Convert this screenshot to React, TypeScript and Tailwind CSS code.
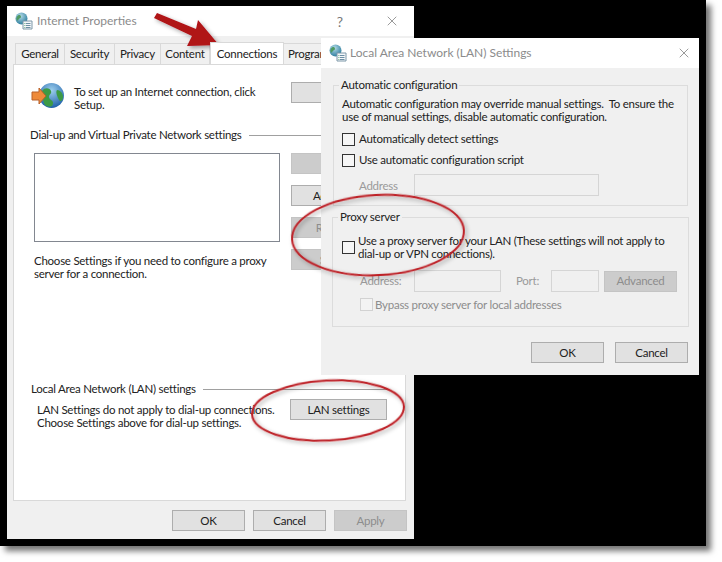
import React from 'react';
import { X } from 'lucide-react';

const PropsIcon = () => (
  <svg width="18" height="18" viewBox="0 0 18 18" className="shrink-0">
    <defs>
      <radialGradient id="pg" cx="40%" cy="30%" r="70%">
        <stop offset="0%" stopColor="#b5dbe8" />
        <stop offset="100%" stopColor="#2f7f9f" />
      </radialGradient>
    </defs>
    <circle cx="6.500" cy="6.500" r="6" fill="url(#pg)" />
    <path d="M3 3.500c2-1 3 0 3 1.500s-2 1-2.500 2.500S2 9 1.500 7.500 2 4 3 3.500z" fill="#4f9a62" />
    <path d="M8 9h9v8H8z" fill="#f4f7fa" stroke="#7c97a8" />
    <path d="M11 11.500h4.500M11 13.500h4.500M11 15.500h4.500" stroke="#6d8fa5" />
    <path d="M9.500 11.500h.8M9.500 13.500h.8M9.500 15.500h.8" stroke="#3f9a5c" />
  </svg>
);

const ConnectIcon = () => (
  <svg width="34" height="28" viewBox="0 0 34 28" className="shrink-0">
    <defs>
      <radialGradient id="gl" cx="50%" cy="30%" r="70%">
        <stop offset="0%" stopColor="#9ed0ee" />
        <stop offset="100%" stopColor="#1d5fa8" />
      </radialGradient>
    </defs>
    <circle cx="20.500" cy="13.500" r="12.500" fill="url(#gl)" />
    <path d="M11 9c3-4 8-3 9 0s-2 3-2 6 5 3 4 7-6 3-8 1-1-5-3-7-1-5 0-7z" fill="#3d9a45" />
    <path d="M26 8c3 0 6 3 6 7s-3 5-4 3-4-8-2-10z" fill="#3d9a45" />
    <path d="M1 10h7V6l7 8-7 8v-4H1z" fill="#ee8a3a" stroke="#b8602a" />
  </svg>
);

const Btn = ({ label, disabled, w = 'w-[73px]', h = 'h-[21px]' }: { label?: string; disabled?: boolean; w?: string; h?: string }) => (
  <div
    className={`${w} ${h} shrink-0 flex items-center justify-center border ${
      disabled ? 'bg-[#cccccc] border-[#c4c4c4] text-[#8d8d8d]' : 'bg-[#e1e1e1] border-[#adadad] text-[#222]'
    }`}
  >
    {label}
  </div>
);

const Check = ({ muted }: { muted?: boolean }) => (
  <div className={`w-[13px] h-[13px] shrink-0 border ${muted ? 'border-[#d2d2d2] bg-[#f3f3f3]' : 'border-[#333] bg-[#f6f6f6]'}`} />
);

const Legend = ({ title }: { title: string }) => (
  <div className="absolute -top-[9px] left-[5px] bg-[#f0f0f0] px-[2px] leading-[16px] text-[#222]">{title}</div>
);

const Field = ({ w }: { w: string }) => <div className={`${w} h-[22px] border border-[#d5d5d5] bg-[#f0f0f0]`} />;

const tabs = ['General', 'Security', 'Privacy', 'Content'];
const tabW = ['w-[50px]', 'w-[51px]', 'w-[47px]', 'w-[50px]'];

const InternetProperties = () => (
  <div className="absolute left-[7px] top-[6px] w-[407px] h-[533px] bg-[#f0f0f0] flex flex-col">
    <div className="h-[30px] bg-white flex items-center pl-[8px] shrink-0 text-[#8b8b8b] text-[12px] tracking-normal">
      <PropsIcon />
      <span className="ml-[4px]">Internet Properties</span>
      <span className="ml-auto mr-[41px] text-[14px] text-[#777]">?</span>
      <X size={16} strokeWidth={1} className="mr-[14px] text-[#666]" />
    </div>
    <div className="h-[28px] flex items-end pl-[8px] shrink-0">
      {tabs.map((t, i) => (
        <div key={t} className={`${tabW[i]} h-[21px] bg-[#f0f0f0] border border-b-0 border-[#d9d9d9] -mr-px flex items-center justify-center text-[#222]`}>
          {t}
        </div>
      ))}
      <div className="w-[74px] h-[22px] bg-white border border-b-0 border-[#d9d9d9] relative z-10 ml-px flex items-center justify-center text-[#222]">
        Connections
      </div>
      <div className="w-[60px] h-[21px] bg-[#f0f0f0] border border-b-0 border-[#d9d9d9] -ml-px pl-[4px] flex items-center text-[#222]">
        Programs
      </div>
    </div>
    <div className="mx-[6px] w-[393px] h-[437px] bg-white border border-[#d9d9d9] shrink-0 flex flex-col pl-[17px] pr-[18px] text-[#222]">
      <div className="flex items-start mt-[17px] h-[44px]">
        <ConnectIcon />
        <div className="ml-[9px] leading-[13px] mt-[3px] whitespace-nowrap">
          <div>To set up an Internet connection, click</div>
          <div>Setup.</div>
        </div>
        {/* label sits behind the LAN dialog */}
        <div className="ml-auto"><Btn w="w-[96px]" /></div>
      </div>
      <div className="flex items-center mt-[1px] -ml-[1px] h-[16px]">
        <span className="whitespace-nowrap">Dial-up and Virtual Private Network settings</span>
        <div className="flex-1 h-px bg-[#a0a0a0] ml-[7px]" />
      </div>
      <div className="flex mt-[10px] justify-between pl-[3px] h-[138px]">
        <div className="w-[246px] h-[89px] border border-[#828790] bg-white" />
        <div className="flex flex-col gap-[11px]">
          <Btn label="Add..." disabled w="w-[96px]" />
          <Btn label="Add VPN..." w="w-[96px]" />
          <Btn label="Remove..." disabled w="w-[96px]" />
          <Btn label="Settings" disabled w="w-[96px]" />
        </div>
      </div>
      <div className="-mt-[37px] pl-[3px] leading-[13px] whitespace-nowrap">
        <div>Choose Settings if you need to configure a proxy</div>
        <div>server for a connection.</div>
      </div>
      <div className="flex items-center mt-[101px] h-[16px]">
        <span className="whitespace-nowrap">Local Area Network (LAN) settings</span>
        <div className="flex-1 h-px bg-[#a0a0a0] ml-[7px]" />
      </div>
      <div className="flex items-start mt-[2px] pl-[6px]">
        <div className="leading-[13px] mt-[4px] whitespace-nowrap">
          <div>LAN Settings do not apply to dial-up connections.</div>
          <div>Choose Settings above for dial-up settings.</div>
        </div>
        <div className="ml-auto"><Btn label="LAN settings" w="w-[97px]" /></div>
      </div>
    </div>
    <div className="flex justify-end gap-[8px] pr-[7px] mt-[9px]">
      <Btn label="OK" />
      <Btn label="Cancel" />
      <Btn label="Apply" disabled />
    </div>
  </div>
);

const LanSettings = () => (
  <div className="absolute left-[321px] top-[38px] w-[378px] h-[337px] bg-[#f0f0f0] flex flex-col text-[#222]">
    <div className="h-[30px] bg-white flex items-center pl-[8px] shrink-0 text-[#8b8b8b] text-[12px] tracking-normal">
      <PropsIcon />
      <span className="ml-[3px]">Local Area Network (LAN) Settings</span>
      <X size={16} strokeWidth={1} className="ml-auto mr-[7px] text-[#666]" />
    </div>
    <div className="relative mt-[17px] ml-[12px] w-[355px] h-[121px] border border-[#dcdcdc] pl-[8px] pt-[11px] shrink-0">
      <Legend title="Automatic configuration" />
      <div className="leading-[13px] whitespace-nowrap">
        <div>Automatic configuration may override manual settings.&nbsp; To ensure the</div>
        <div>use of manual settings, disable automatic configuration.</div>
      </div>
      <div className="flex items-center gap-[4px] mt-[8px] h-[16px]"><Check />Automatically detect settings</div>
      <div className="flex items-center gap-[4px] mt-[5px] h-[16px]"><Check />Use automatic configuration script</div>
      <div className="flex items-center mt-[6px] pl-[17px] text-[#9a9a9a]">
        <span className="w-[55px] pt-[2px]">Address</span>
        <Field w="w-[185px]" />
      </div>
    </div>
    <div className="relative mt-[11px] ml-[11px] w-[357px] h-[110px] border border-[#dcdcdc] pl-[9px] pt-[16px] shrink-0">
      <Legend title="Proxy server" />
      <div className="flex items-center gap-[3px]">
        <Check />
        <div className="leading-[13px] whitespace-nowrap">
          <div>Use a proxy server for your LAN (These settings will not apply to</div>
          <div>dial-up or VPN connections).</div>
        </div>
      </div>
      <div className="flex items-center mt-[10px] pl-[18px] text-[#9a9a9a]">
        <span className="w-[54px]">Address:</span>
        <Field w="w-[87px]" />
        <span className="ml-[15px] w-[35px]">Port:</span>
        <Field w="w-[48px]" />
        <div className="ml-[5px]"><Btn label="Advanced" disabled /></div>
      </div>
      <div className="flex items-center gap-[2px] mt-[4px] pl-[18px] text-[#8d8d8d]">
        <Check muted />
        Bypass proxy server for local addresses
      </div>
    </div>
    <div className="flex justify-end gap-[11px] pr-[11px] mt-[15px]">
      <Btn label="OK" />
      <Btn label="Cancel" />
    </div>
  </div>
);

// red arrow and hand-drawn circles on top of the screenshot
const Annotations = () => (
  <svg width="722" height="562" className="absolute left-0 top-0 pointer-events-none">
    <defs>
      <filter id="sh" x="-20%" y="-20%" width="140%" height="140%">
        <feDropShadow dx="2" dy="2" stdDeviation="2" floodColor="#000" floodOpacity="0.35" />
      </filter>
    </defs>
    <g filter="url(#sh)">
      <path d="M154 18 L157 13 L196 29 L198 20 L219 45 L187 46 L192 36 Z" fill="#b01218" />
      <ellipse cx="378" cy="235" rx="86" ry="40" transform="rotate(-3 378 235)" fill="none" stroke="#bd2026" strokeWidth="2" />
      <ellipse cx="328" cy="410.500" rx="76" ry="30" transform="rotate(-3 328 410.500)" fill="none" stroke="#bd2026" strokeWidth="2" />
    </g>
  </svg>
);

export default function App() {
  return (
    <div className="relative w-[722px] h-[562px] bg-white overflow-hidden text-[11.500px] tracking-[-0.25px] font-['Lato','Liberation_Sans',sans-serif]">
      <div className="absolute left-0 top-0 w-[706px] h-[546px] bg-black shadow-[5px_5px_6px_rgba(0,0,0,0.55)]" />
      <InternetProperties />
      <LanSettings />
      <Annotations />
    </div>
  );
}
